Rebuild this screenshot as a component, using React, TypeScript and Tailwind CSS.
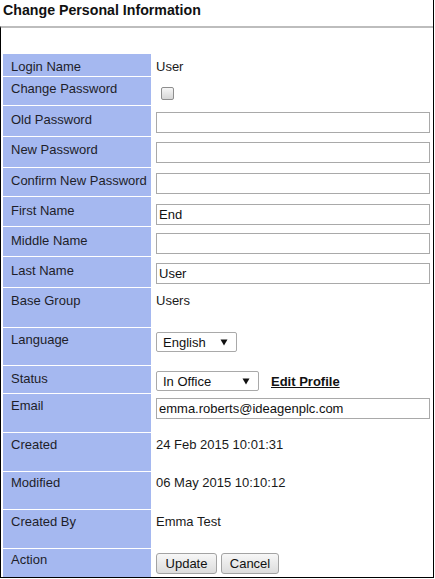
import React from "react";

type Row = {
  label: string;
  h: string;
  lp: string;
  vp: string;
  kind: "text" | "check" | "input" | "lang" | "status" | "buttons";
  value?: string;
};

const rows: Row[] = [
  { label: "Login Name", h: "h-[22px]", lp: "pt-[5px]", vp: "pt-[5px]", kind: "text", value: "User" },
  { label: "Change Password", h: "h-[28px]", lp: "pt-[4px]", vp: "pt-[4px]", kind: "check" },
  { label: "Old Password", h: "h-[30px]", lp: "pt-[6px]", vp: "pt-[6px]", kind: "input", value: "" },
  { label: "New Password", h: "h-[30px]", lp: "pt-[5px]", vp: "pt-[5px]", kind: "input", value: "" },
  { label: "Confirm New Password", h: "h-[28px]", lp: "pt-[5px]", vp: "pt-[5px]", kind: "input", value: "" },
  { label: "First Name", h: "h-[29px]", lp: "pt-[6px]", vp: "pt-[7px]", kind: "input", value: "End" },
  { label: "Middle Name", h: "h-[29px]", lp: "pt-[6px]", vp: "pt-[6px]", kind: "input", value: "" },
  { label: "Last Name", h: "h-[30px]", lp: "pt-[6px]", vp: "pt-[6px]", kind: "input", value: "User" },
  { label: "Base Group", h: "h-[39px]", lp: "pt-[5px]", vp: "pt-[5px]", kind: "text", value: "Users" },
  { label: "Language", h: "h-[37px]", lp: "pt-[4px]", vp: "pt-[4px]", kind: "lang" },
  { label: "Status", h: "h-[27px]", lp: "pt-[5px]", vp: "pt-[5px]", kind: "status" },
  { label: "Email", h: "h-[38px]", lp: "pt-[4px]", vp: "pt-[4px]", kind: "input", value: "emma.roberts@ideagenplc.com" },
  { label: "Created", h: "h-[38px]", lp: "pt-[4px]", vp: "pt-[4px]", kind: "text", value: "24 Feb 2015 10:01:31" },
  { label: "Modified", h: "h-[37px]", lp: "pt-[3px]", vp: "pt-[3px]", kind: "text", value: "06 May 2015 10:10:12" },
  { label: "Created By", h: "h-[38px]", lp: "pt-[4px]", vp: "pt-[4px]", kind: "text", value: "Emma Test" },
  { label: "Action", h: "h-[28px]", lp: "pt-[3px]", vp: "pt-[4px]", kind: "buttons" },
];

function Arrow() {
  return (
    <svg width="8" height="7" viewBox="0 0 8 7" className="shrink-0">
      <polygon points="0.5,0.5 7.5,0.5 4,6.5" fill="#111" />
    </svg>
  );
}

function SelectBox({ text, w }: { text: string; w: string }) {
  return (
    <div
      className={`${w} h-[20px] border border-[#a9a9a9] rounded-[2px] bg-white flex items-center justify-between pl-[6px] pr-[8px] text-[#111]`}
    >
      <span>{text}</span>
      <Arrow />
    </div>
  );
}

function Btn({ text, w }: { text: string; w: string }) {
  return (
    <div
      className={`${w} h-[21px] border border-[#a3a3a3] rounded-[3px] bg-linear-to-b from-[#f7f7f7] to-[#dcdcdc] flex items-center justify-center text-[#111]`}
    >
      {text}
    </div>
  );
}

function Value({ row }: { row: Row }) {
  switch (row.kind) {
    case "text":
      return <div className="text-[#1a1a1a]">{row.value}</div>;
    case "check":
      return (
        <div className="mt-[6px] ml-[5px] w-[13px] h-[13px] rounded-[2px] border border-[#8e8e8e] bg-linear-to-b from-[#f6f6f6] to-[#d6d6d6]" />
      );
    case "input":
      return (
        <div className="w-[274px] h-[21px] border border-[#a9a9a9] bg-white flex items-center pl-[2px] text-[#111]">
          {row.value}
        </div>
      );
    case "lang":
      return <SelectBox text="English" w="w-[81px]" />;
    case "status":
      return (
        <div className="flex items-center">
          <SelectBox text="In Office" w="w-[103px]" />
          <span className="ml-[12px] font-bold underline text-[#111]">Edit Profile</span>
        </div>
      );
    case "buttons":
      return (
        <div className="flex gap-[4px]">
          <Btn text="Update" w="w-[61px]" />
          <Btn text="Cancel" w="w-[58px]" />
        </div>
      );
  }
}

export default function App() {
  return (
    <div className="w-[435px] h-[579px] bg-white font-['Liberation_Sans',Arial,sans-serif] text-[13px] leading-[15px] text-[#222]">
      <div className="w-[434px] h-[578px] border-r border-black flex flex-col">
        <div className="h-[26px] pl-[3px] pt-[2px] font-bold text-[14.2px] leading-[16px] text-[#111] whitespace-nowrap">
          Change Personal Information
        </div>
        <div className="flex-1 border-t-2 border-t-[#bdbdbd] border-l border-l-black border-b border-b-black pt-[26px] pl-[2px] flex flex-col gap-px">
          {rows.map((r) => (
            <div key={r.label} className={`flex ${r.h}`}>
              <div
                className={`w-[148px] shrink-0 bg-[#a5b8f0] pl-[8px] whitespace-nowrap text-[#1e1e2a] ${r.lp}`}
              >
                {r.label}
              </div>
              <div className={`flex-1 pl-[5px] ${r.vp}`}>
                <Value row={r} />
              </div>
            </div>
          ))}
        </div>
      </div>
    </div>
  );
}
